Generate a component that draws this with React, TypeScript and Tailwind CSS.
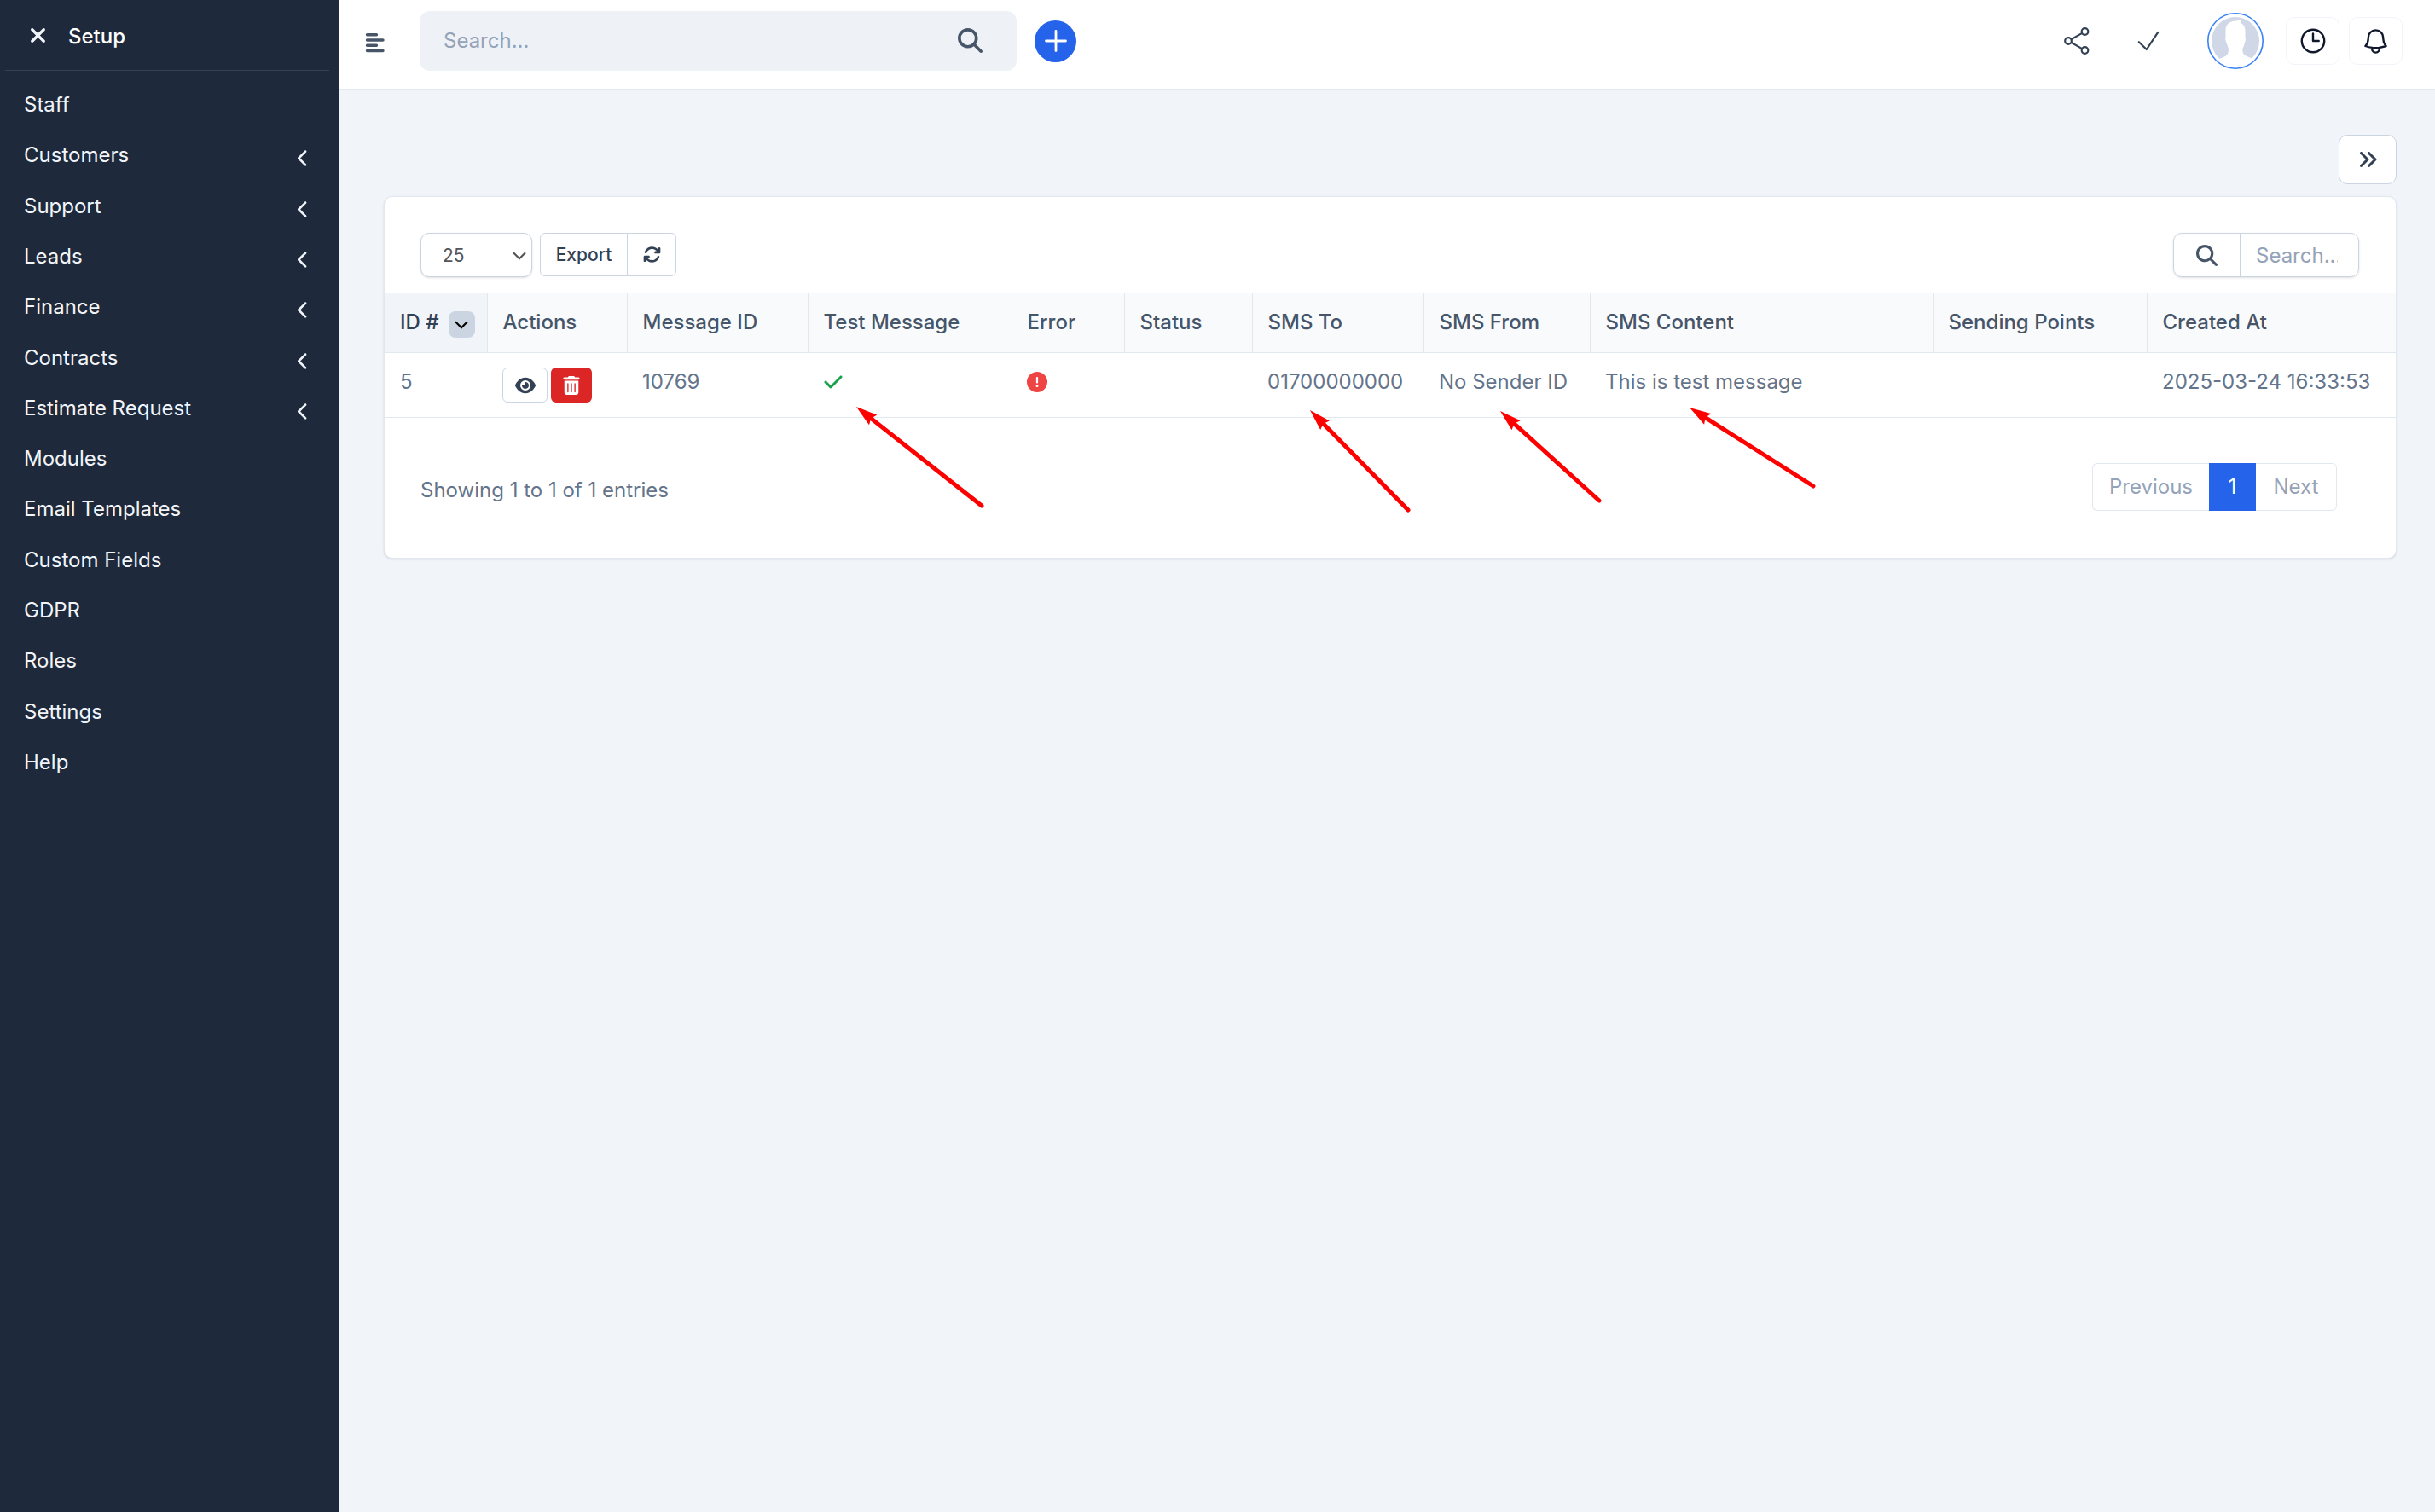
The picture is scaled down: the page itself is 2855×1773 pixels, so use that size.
import React from "react";
import { FaXmark, FaChevronLeft, FaMagnifyingGlass, FaArrowsRotate, FaEye, FaTrashCan, FaCheck, FaCircleExclamation, FaAnglesRight } from "react-icons/fa6";

const menu: { label: string; nested?: boolean }[] = [
  { label: "Staff" },
  { label: "Customers", nested: true },
  { label: "Support", nested: true },
  { label: "Leads", nested: true },
  { label: "Finance", nested: true },
  { label: "Contracts", nested: true },
  { label: "Estimate Request", nested: true },
  { label: "Modules" },
  { label: "Email Templates" },
  { label: "Custom Fields" },
  { label: "GDPR" },
  { label: "Roles" },
  { label: "Settings" },
  { label: "Help" },
];

function Sidebar() {
  return (
    <aside className="w-[398px] shrink-0 bg-[#1e293b] text-[#f1f5f9]">
      <div className="ml-1.5 mr-3 flex h-[83px] items-center border-b border-[#334155] pl-[25px]">
        <button type="button" aria-label="Close setup menu">
          <FaXmark className="size-[27px]" />
        </button>
        <span className="ml-[22px] pt-0.5 font-medium text-white">Setup</span>
      </div>
      <nav aria-label="Setup">
        <ul className="mt-2.5 grid h-[830px] auto-rows-fr">
          {menu.map((item) => (
            <li key={item.label} className="flex">
              <a href="#" className="flex flex-1 items-center justify-between pl-7 pr-8">
                {item.label}
                {item.nested && <FaChevronLeft className="mt-2 size-[21px]" />}
              </a>
            </li>
          ))}
        </ul>
      </nav>
    </aside>
  );
}

function Avatar() {
  return (
    <svg viewBox="0 0 66 66" className="size-[66px]" aria-hidden="true">
      <circle cx="33" cy="33" r="32.2" fill="#fff" stroke="#3b82f6" strokeWidth="1.6" />
      <circle cx="33" cy="33" r="28" fill="#d0d7e6" />
      <path
        d="M33 9.500C26 10 22 13.500 21.500 19.500v9c-1 1.500.5 6 1.300 7.500 1 3 1.700 4.500 2.200 6.500 0 4-1 6-3 8-2.500 1.500-5.500 2.500-8 3.800A28 28 0 0 0 33 61a28 28 0 0 0 19.500-7.200c-2.500-1.300-5-2.300-8.500-3.800-2-2-3-4-2.500-8 1-2 1.500-3.500 2.200-6.500 1-1.500 1.800-6 .8-7.500v-8c-.3-4-2.500-7-6-8.500l1-2.500c-2-.3-4.500 0-6.500.5z"
        fill="#fff"
      />
    </svg>
  );
}

function Header() {
  return (
    <header className="flex h-[105px] items-center border-b border-[#e2e8f0] bg-white pb-2 pl-[30px] pr-[38px]">
      <button type="button" aria-label="Toggle sidebar" className="mt-1">
        <svg viewBox="0 0 23 24" className="h-6 w-[23px]" stroke="#475569" strokeWidth="3.400" strokeLinecap="round" aria-hidden="true">
          <path d="M2.500 2.700h11M2.500 9h18.500M2.500 15.200h11M2.500 21.500h18.500" />
        </svg>
      </button>
      <form className="ml-[41px] flex h-[70px] w-[700px] items-center rounded-xl bg-[#eef2f7] pl-7 pr-10 pb-0.5">
        <input type="text" aria-label="Search" placeholder="Search..." className="min-w-0 flex-1 bg-transparent outline-none placeholder:text-[#94a3b8]" />
        <button type="button" aria-label="Search">
          <FaMagnifyingGlass className="size-[29px] text-[#475569]" />
        </button>
      </form>
      <button type="button" aria-label="Quick create" className="ml-[21px] flex size-[49px] items-center justify-center rounded-full bg-[#2563eb]">
        <svg viewBox="0 0 26 26" className="size-[26px]" stroke="#fff" strokeWidth="2.800" strokeLinecap="round" aria-hidden="true">
          <path d="M13 1.500v23M1.500 13h23" />
        </svg>
      </button>
      <div className="ml-auto flex items-center">
        <button type="button" aria-label="Share">
          <svg viewBox="0 0 30 32" className="h-8 w-[30px]" fill="none" stroke="#334155" strokeWidth="2.200" aria-hidden="true">
            <circle cx="5" cy="16" r="3.800" />
            <circle cx="24.500" cy="5" r="3.800" />
            <circle cx="24.500" cy="27" r="3.800" />
            <path d="M8.300 14.200 21.200 6.900M8.300 17.800l12.900 7.300" />
          </svg>
        </button>
        <button type="button" aria-label="To do" className="ml-14">
          <svg viewBox="0 0 26 24" className="h-6 w-[26px]" fill="none" stroke="#334155" strokeWidth="2.200" strokeLinecap="round" strokeLinejoin="round" aria-hidden="true">
            <path d="M1.800 13.200 10.800 22 24.200 1.800" />
          </svg>
        </button>
        <button type="button" aria-label="Profile" className="ml-14">
          <Avatar />
        </button>
        <button type="button" aria-label="Timesheets" className="ml-[26px] flex h-14 w-[63px] items-center justify-center rounded-[10px] border border-[#f1f5f9]">
          <svg viewBox="0 0 30 30" className="size-[30px]" fill="none" stroke="#0f172a" strokeWidth="2.400" strokeLinecap="round" strokeLinejoin="round" aria-hidden="true">
            <circle cx="15" cy="15" r="13.200" />
            <path d="M15 6.500V15h6.700" />
          </svg>
        </button>
        <button type="button" aria-label="Notifications" className="ml-[11px] flex h-14 w-[63px] items-center justify-center rounded-[10px] border border-[#f1f5f9]">
          <svg viewBox="0 0 24 24" className="size-[35px]" fill="none" stroke="#0f172a" strokeWidth="1.600" strokeLinecap="round" strokeLinejoin="round" aria-hidden="true">
            <path d="M14.857 17.082a23.848 23.848 0 0 0 5.454-1.310A8.967 8.967 0 0 1 18 9.750V9A6 6 0 0 0 6 9v.750a8.967 8.967 0 0 1-2.312 6.022c1.733.640 3.560 1.085 5.455 1.310m5.714 0a24.255 24.255 0 0 1-5.714 0m5.714 0a3 3 0 1 1-5.714 0" />
          </svg>
        </button>
      </div>
    </header>
  );
}

/* Red callout arrow whose tip is the top-left corner of its box. */
function Arrow({ dx, dy, className }: { dx: number; dy: number; className: string }) {
  const length = Math.hypot(dx, dy);
  const angle = (Math.atan2(dy, dx) * 180) / Math.PI;
  return (
    <svg width={dx} height={dy} className={`pointer-events-none absolute overflow-visible ${className}`} aria-hidden="true">
      <g transform={`rotate(${angle})`} fill="#ff0000">
        <path d="M0 0 25-7.500 22 0 25 7.500z" />
        <path d={`M20 0H${length}`} stroke="#ff0000" strokeWidth="5" strokeLinecap="round" />
      </g>
    </svg>
  );
}

const Chevron = ({ className }: { className: string }) => (
  <svg viewBox="0 0 16 10" className={className} fill="none" stroke="currentColor" strokeWidth="2.200" aria-hidden="true">
    <path d="m1 1.200 7 7 7-7" />
  </svg>
);

const columns = [
  { label: "Actions", width: "w-[164px]" },
  { label: "Message ID", width: "w-[212px]" },
  { label: "Test Message", width: "w-[239px]" },
  { label: "Error", width: "w-[132px]" },
  { label: "Status", width: "w-[150px]" },
  { label: "SMS To", width: "w-[201px]" },
  { label: "SMS From", width: "w-[195px]" },
  { label: "SMS Content", width: "w-[402px]" },
  { label: "Sending Points", width: "w-[251px]" },
  { label: "Created At", width: "w-[292px]" },
];

function MessagesTable() {
  return (
    <table className="w-full table-fixed border-y border-[#e2e8f0] text-left whitespace-nowrap">
      <thead>
        <tr className="h-[70px] border-b border-[#e2e8f0] bg-[#f8fafc] text-[#475569] *:pb-0.5">
          <th scope="col" className="w-[120px] border-r border-[#e2e8f0] bg-[#f1f5f9] pl-[18px] font-medium text-[#334155]">
            <div className="flex items-center">
              ID #
              <button type="button" aria-label="Sort by ID" className="ml-[11px] mt-1.5 flex size-[31px] items-center justify-center rounded-lg bg-[#cbd5e1] text-black">
                <Chevron className="h-2.5 w-4" />
              </button>
            </div>
          </th>
          {columns.map((column) => (
            <th key={column.label} scope="col" className={`${column.width} border-r border-[#e2e8f0] pl-[18px] font-medium last:border-r-0`}>
              {column.label}
            </th>
          ))}
        </tr>
      </thead>
      <tbody>
        <tr className="h-[76px] align-top text-[#64748b] *:pt-4 *:pl-[18px]">
          <td>5</td>
          <td>
            <div className="mt-px flex gap-1">
              <button type="button" aria-label="View" className="flex h-[41px] w-[53px] items-center justify-center rounded-md border border-[#cbd5e1] bg-white">
                <FaEye className="size-6 text-[#334155]" />
              </button>
              <button type="button" aria-label="Delete" className="flex h-[41px] w-12 items-center justify-center rounded-md bg-[#dc2626]">
                <FaTrashCan className="size-[22px] text-white" />
              </button>
            </div>
          </td>
          <td>10769</td>
          <td className="relative">
            <FaCheck className="mt-1.5 size-6 text-[#16a34a]" />
            <Arrow dx={147} dy={116} className="left-[57px] top-[63px]" />
          </td>
          <td>
            <FaCircleExclamation className="mt-1.5 size-6 text-[#ef4444]" />
          </td>
          <td></td>
          <td className="relative">
            01700000000
            <Arrow dx={115} dy={117} className="left-[68px] top-[67px]" />
          </td>
          <td className="relative">
            No Sender ID
            <Arrow dx={116} dy={105} className="left-[90px] top-[68px]" />
          </td>
          <td className="relative">
            This is test message
            <Arrow dx={145} dy={92} className="left-[117px] top-[64px]" />
          </td>
          <td></td>
          <td>2025-03-24 16:33:53</td>
        </tr>
      </tbody>
    </table>
  );
}

function MessagesCard() {
  return (
    <section className="mt-3.5 rounded-[10px] border border-[#e2e8f0] bg-white shadow">
      <div className="flex items-start px-[42px] pt-[42px] pb-[18px]">
        <div className="relative">
          <select aria-label="Rows per page" defaultValue="25" className="h-[52px] w-[131px] appearance-none rounded-[10px] border border-[#cbd5e1] bg-white pl-[25px] text-[21px] text-[#555555] shadow-sm">
            <option>25</option>
            <option>50</option>
            <option>100</option>
          </select>
          <Chevron className="pointer-events-none absolute right-[7px] top-[22px] h-2.5 w-4 text-[#555555]" />
        </div>
        <div className="ml-[9px] flex h-[51px] rounded-md border border-[#cbd5e1] text-[21px] font-medium text-[#334155]">
          <button type="button" className="w-[102px] border-r border-[#cbd5e1]">Export</button>
          <button type="button" aria-label="Reload" className="flex w-14 items-center justify-center">
            <FaArrowsRotate className="size-[21px]" />
          </button>
        </div>
        <div className="ml-auto mr-px flex h-[52px] w-[218px] rounded-[10px] border border-[#cbd5e1] shadow-sm">
          <span className="flex w-[78px] items-center justify-center border-r border-[#cbd5e1]">
            <FaMagnifyingGlass className="size-[25px] text-[#475569]" />
          </span>
          <input type="text" aria-label="Search messages" placeholder="Search..." className="min-w-0 flex-1 bg-transparent pl-[18px] pr-6 outline-none placeholder:text-[#94a3b8]" />
        </div>
      </div>
      <MessagesTable />
      <div className="flex items-start justify-between pt-[53px] pr-[69px] pb-[55px] pl-[42px]">
        <p className="mt-3.5 text-[#64748b]">Showing 1 to 1 of 1 entries</p>
        <nav aria-label="Pagination" className="flex h-14 items-stretch text-[#94a3b8] *:pb-0.5">
          <a href="#" className="flex w-[137px] items-center justify-center rounded-l-md border border-r-0 border-[#e2e8f0]">Previous</a>
          <a href="#" aria-current="page" className="flex w-[55px] items-center justify-center bg-[#2563eb] text-white">1</a>
          <a href="#" className="flex w-[95px] items-center justify-center rounded-r-md border border-l-0 border-[#e2e8f0]">Next</a>
        </nav>
      </div>
    </section>
  );
}

export default function App() {
  return (
    <div className="flex min-h-screen bg-[#f1f5f9] font-['Inter',sans-serif] text-[24px] leading-[35px]">
      <Sidebar />
      <div className="min-w-0 flex-1">
        <Header />
        <main className="pt-[53px] pr-[45px] pb-12 pl-[52px]">
          <div className="flex justify-end">
            <button type="button" aria-label="Expand panel" className="flex h-[58px] w-[68px] items-center justify-center rounded-[10px] border border-[#cbd5e1] bg-white">
              <FaAnglesRight className="size-6 text-[#334155]" />
            </button>
          </div>
          <MessagesCard />
        </main>
      </div>
    </div>
  );
}
